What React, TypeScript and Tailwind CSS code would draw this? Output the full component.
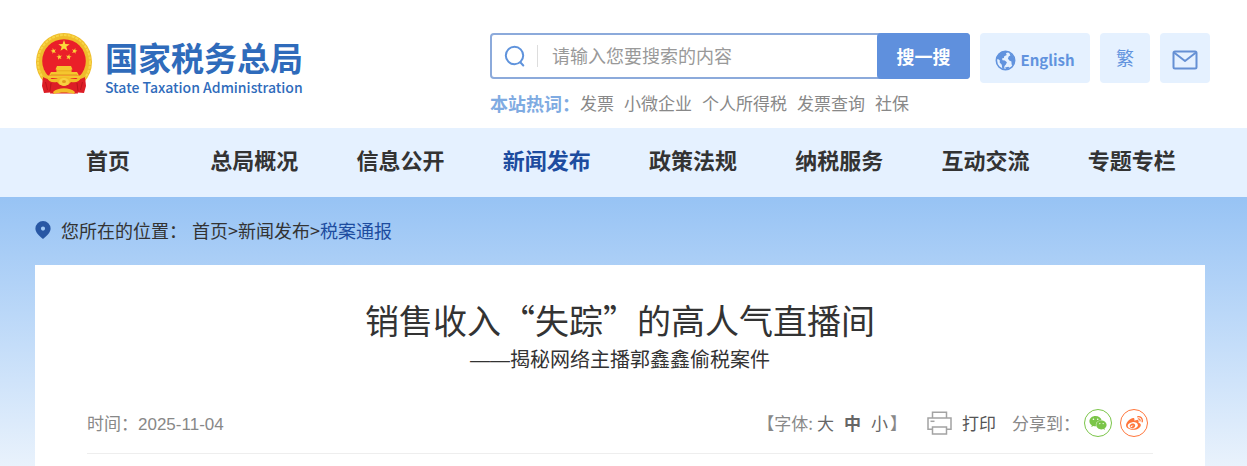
import type { ReactNode } from "react";
import { FaWeibo, FaWeixin } from "react-icons/fa6";

const HOT_WORDS = ["发票", "小微企业", "个人所得税", "发票查询", "社保"];

const NAV = [
  "首页",
  "总局概况",
  "信息公开",
  "新闻发布",
  "政策法规",
  "纳税服务",
  "互动交流",
  "专题专栏",
];

const STAR =
  "M0 -10L2.3 -3.2L9.5 -3.1L3.8 1.2L5.9 8.1L0 4L-5.9 8.1L-3.8 1.2L-9.5 -3.1L-2.3 -3.2Z";

function Emblem() {
  return (
    <svg viewBox="0 0 56 61" className="h-[61px] w-14 shrink-0" aria-hidden="true">
      {/* wheat ring */}
      <ellipse cx="28" cy="29" rx="28" ry="29" fill="#efbd2b" />
      <ellipse cx="28" cy="29" rx="26" ry="27" fill="none" stroke="#f8d646" strokeWidth="2" strokeDasharray="3 1" />
      <circle cx="28" cy="28" r="21.800" fill="#ea1f29" />
      {/* stars */}
      <g fill="#fbd93a">
        <path d={STAR} transform="translate(28 13) scale(.6)" />
        <path d={STAR} transform="translate(17.500 18) rotate(-15) scale(.3)" />
        <path d={STAR} transform="translate(38.500 18) rotate(15) scale(.3)" />
        <path d={STAR} transform="translate(23.300 24) rotate(-10) scale(.3)" />
        <path d={STAR} transform="translate(32.700 24) rotate(10) scale(.3)" />
      </g>
      {/* gate */}
      <g fill="#f5c62e">
        <path d="M21 33h14l1.500 3.500h-17z" />
        <path d="M20.500 36h15v3h-15z" />
        <path d="M15 39h26l2 3.500H13z" />
        <path d="M11 42.500h34l-1 2.500H12z" />
      </g>
      <path d="M20 37.800h16M15 41.500h26" stroke="#e09a1c" strokeWidth=".6" />
      {/* ribbons and gear */}
      <path d="M7 44c5 3 10 2.500 16 1l-5 15.500-4-1-6 .5-2-7z" fill="#dd1d26" />
      <path d="M49 44c-5 3-10 2.500-16 1l5 15.500 4-1 6 .5 2-7z" fill="#dd1d26" />
      <path d="M16 50c7-5 17-5 24 0l2 10.500H14z" fill="#dd1d26" />
      <path d="M11 44.500c5 3 10 1 13-.5h8c3 1.500 8 3.500 13 .5-1 4-5 5.500-10 4.500l-3 3h-8l-3-3c-5 1-9-.5-10-4.500z" fill="#f2bd28" />
      <ellipse cx="28" cy="49" rx="5" ry="4" fill="#f8d040" />
      <ellipse cx="28" cy="48.500" rx="2" ry="1.500" fill="#e09a1c" />
      <path d="M17 59c5-5 17-5 22 0l-1 2c-6-2-14-2-20 0z" fill="#f2bd28" />
      <path d="M9.500 49l2 8M46.500 49l-2 8M15 50l-1 8M41 50l1 8" stroke="#b31219" strokeWidth=".8" />
    </svg>
  );
}

function GlobeIcon() {
  return (
    <svg viewBox="0 0 22 22" className="size-[21px] shrink-0" fill="currentColor" aria-hidden="true">
      <circle cx="11" cy="11" r="9.600" fill="none" stroke="currentColor" strokeWidth="1.700" />
      <path d="M1.500 9.500C2.200 5 5.500 2 10 1.400l3.200.6-1.700 1.700.8 1.500-2.600 1.300-.4 2-2 .5.600 1.700 2.400.3 2.200 1.800-1.100 2.400-1.500 1.500-.3 3.200-2-.6-.5-3.900-2.200-2.300.2-2.200-2-1.400z" />
      <path d="M15 3.200l2.800 1.500 2.500 4.400.2 3.600-1.800 3.700-1.300-1.200-.2-3.200-2.200-.9-1.500-2.200 1-2.400 1.600-.8z" />
      <path d="M10.500 18.300l3.500-.7 1.500 1.300-3.500 1.600z" />
    </svg>
  );
}

function SearchIcon() {
  return (
    <svg viewBox="0 0 22 22" className="size-[22px] shrink-0" fill="none" stroke="#5f93dc" strokeWidth="2" strokeLinecap="round" aria-hidden="true">
      <circle cx="10.500" cy="10.500" r="8.700" />
      <path d="M16.500 17.500l2.800 3" />
    </svg>
  );
}

function MailIcon() {
  return (
    <svg viewBox="0 0 26 20" className="mt-1 h-5 w-[26px]" fill="none" stroke="#6590d4" strokeWidth="2" strokeLinejoin="round" aria-hidden="true">
      <rect x="1.500" y="1.500" width="23" height="17" rx="1.500" />
      <path d="M2 2.500l11 8.500L24 2.500" />
    </svg>
  );
}

function PinIcon() {
  return (
    <svg viewBox="0 0 16 18" className="h-[18px] w-4" aria-hidden="true">
      <path fillRule="evenodd" fill="#2857a4" d="M8 0a7.600 7.600 0 0 1 7.600 7.600c0 4-3.600 7-7.600 10.400C4 14.600.4 11.600.4 7.600A7.600 7.600 0 0 1 8 0zm0 5.500a2.100 2.100 0 1 0 0 4.200 2.100 2.100 0 0 0 0-4.200z" />
    </svg>
  );
}

function PrintIcon() {
  return (
    <svg viewBox="0 0 25 24" className="h-6 w-[25px]" fill="none" stroke="#a3a3a3" strokeWidth="1.500" aria-hidden="true">
      <path d="M5.500 7V1.200h14V7" />
      <path d="M5 18.300H1V7h23v11.300h-4" />
      <path d="M5.500 16h14v7h-14z" />
      <path d="M3.500 10.300h4" />
    </svg>
  );
}

function Tile({ label, className, children }: { label: string; className: string; children: ReactNode }) {
  return (
    <a
      href="#"
      aria-label={label}
      className={`flex h-[50px] justify-center rounded bg-[#e5f1ff] text-[#6193de] ${className}`}
    >
      {children}
    </a>
  );
}

export default function App() {
  return (
    <div className="min-h-screen bg-white font-['Noto_Sans_CJK_SC',sans-serif] text-[#333]">
      <header className="flex h-32 items-start justify-between pt-[33px] pr-[37px] pl-9">
        <a href="#" className="flex items-start gap-[13px] text-[#2f6bbb]">
          <Emblem />
          <span className="block pt-0.5">
            <span className="block text-[33px] leading-[44px] font-bold">国家税务总局</span>
            <span className="block text-sm leading-4 font-medium">State Taxation Administration</span>
          </span>
        </a>

        <div className="flex w-[720px] items-start gap-2.5">
          <div className="flex-1">
            <form className="flex h-[46px] items-center rounded border-2 border-[#8caadb] pl-3">
              <SearchIcon />
              <input
                type="text"
                aria-label="搜索"
                placeholder="请输入您要搜索的内容"
                className="ml-[11px] h-[22px] min-w-0 flex-1 border-l border-[#ddd] pb-0.5 pl-3.5 text-lg leading-5 outline-none placeholder:text-[#999]"
              />
              <button type="button" className="-my-0.5 -mr-0.5 h-[46px] w-[93px] rounded bg-[#5f90dd] text-lg font-bold text-white">
                搜一搜
              </button>
            </form>
            <div className="mt-3 flex items-center text-[17px] leading-6 whitespace-nowrap text-[#888]">
              <span className="text-lg leading-6 font-bold text-[#7fabe2]">本站热词：</span>
              <div className="flex gap-2.5">
                {HOT_WORDS.map((word) => (
                  <a key={word} href="#">{word}</a>
                ))}
              </div>
            </div>
          </div>
          <Tile label="English" className="w-[110px] items-center gap-1 pt-1 text-[15px] font-bold">
            <GlobeIcon />
            English
          </Tile>
          <Tile label="繁" className="w-[50px] text-lg leading-[48px]">繁</Tile>
          <Tile label="邮箱" className="w-[50px] items-center">
            <MailIcon />
          </Tile>
        </div>
      </header>

      <nav className="h-[69px] bg-[#e5f1ff] pr-[42px] pl-[35px]">
        <ul className="grid grid-cols-8 text-center text-[22px] leading-[62px] font-bold">
          {NAV.map((item) => (
            <li key={item}>
              <a href="#" className={item === "新闻发布" ? "text-[#1d4c9f]" : ""}>{item}</a>
            </li>
          ))}
        </ul>
      </nav>

      <main className="bg-linear-to-b from-[#97c3f4] to-[#e9f2fc] pr-[42px] pl-[35px]">
        <div className="flex h-[68px] items-center pb-0.5 text-lg">
          <PinIcon />
          <span className="ml-2.5">您所在的位置：</span>
          <span className="ml-[5px]">
            <a href="#">首页</a>&gt;<a href="#">新闻发布</a>&gt;<a href="#" className="text-[#1d4c9f]">税案通报</a>
          </span>
        </div>

        <article className="min-h-[201px] bg-white px-[52px] pt-[30px]">
          <h1 className="text-center text-[34px] leading-[50px]">销售收入“失踪”的高人气直播间</h1>
          <p className="mt-0.5 text-center text-xl leading-6">
            <span className="font-['Liberation_Sans',sans-serif]">——</span>揭秘网络主播郭鑫鑫偷税案件
          </p>

          <div className="mt-[37px] flex items-start justify-between border-b border-[#eee] pr-[5px] pb-3.5 text-[17px] leading-7 text-[#888]">
            <span>
              时间：<span className="font-['Liberation_Sans',sans-serif]">2025-11-04</span>
            </span>
            <div className="flex items-center">
              <div className="flex">
                <span className="mr-1">【字体:</span>
                <div className="flex gap-2.5 text-[#666]">
                  <button type="button">大</button>
                  <button type="button" className="font-bold">中</button>
                  <button type="button">小</button>
                </div>
                <span className="ml-0.5">】</span>
              </div>
              <button type="button" className="ml-5 flex items-center gap-2.5 text-[#555]">
                <PrintIcon />
                打印
              </button>
              <span className="ml-4">分享到：</span>
              <a href="#" aria-label="微信" className="ml-1 flex size-7 items-center justify-center rounded-full border border-[#7bc549] text-[#7bc549]">
                <FaWeixin className="size-[18px]" />
              </a>
              <a href="#" aria-label="微博" className="ml-2 flex size-7 items-center justify-center rounded-full border border-[#ff763b] text-[#ff763b]">
                <FaWeibo className="size-[17px]" />
              </a>
            </div>
          </div>
        </article>
      </main>
    </div>
  );
}
